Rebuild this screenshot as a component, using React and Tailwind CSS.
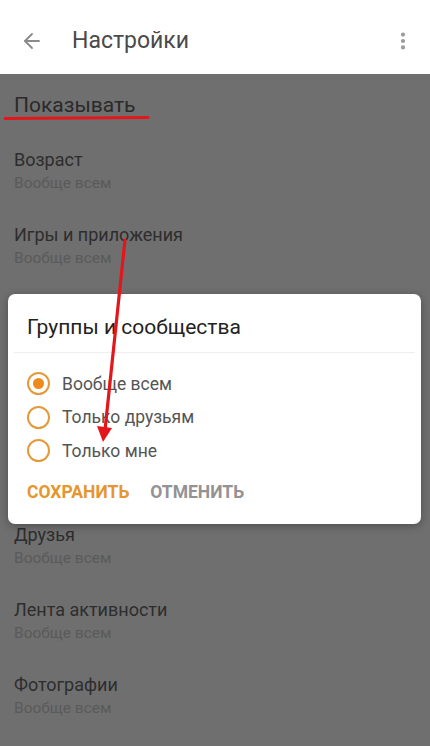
import { ArrowLeft, MoreVertical } from "lucide-react";

const font = { fontFamily: "Roboto, 'Noto Sans', sans-serif" };

// null = row hidden behind the dialog
const items = [
  "Возраст",
  "Игры и приложения",
  null,
  null,
  null,
  "Друзья",
  "Лента активности",
  "Фотографии",
];

function Row({ title }) {
  return (
    <div className="h-[75px] px-[14px] pt-[27px]">
      {title && (
        <>
          <div className="text-[18px] leading-[24px] text-[#2d2d2d]">{title}</div>
          <div className="text-[15.5px] leading-[22px] text-[#5a5a5a]">Вообще всем</div>
        </>
      )}
    </div>
  );
}

function Radio({ checked, label }) {
  return (
    <div className="flex items-center h-[33.5px] gap-[12px]">
      <span className="w-[23px] h-[23px] rounded-full border-[2.5px] border-[#e39a3a] flex items-center justify-center">
        {checked && <span className="w-[11px] h-[11px] rounded-full bg-[#ee8a1c]" />}
      </span>
      <span className="text-[17.5px] text-[#555]">{label}</span>
    </div>
  );
}

export default function App() {
  return (
    <div className="relative w-[430px] h-[746px] overflow-hidden bg-[#6f6f6f]" style={font}>
      {/* header */}
      <div className="h-[74px] bg-white flex items-center pl-[20px] pr-[16px] pt-[8px]">
        <ArrowLeft size={24} strokeWidth={1.8} className="text-[#8a8a8a]" />
        <span className="ml-[28px] text-[23px] text-[#4a4a4a]">Настройки</span>
        <MoreVertical size={22} strokeWidth={2.6} className="ml-auto text-[#9a9a9a]" />
      </div>

      {/* list (dimmed) */}
      <div className="px-[14px] pt-[19px] h-[47px]">
        <span className="text-[21px] leading-[24px] text-[#2a2a2a]">Показывать</span>
      </div>
      <div>
        {items.map((t, i) => (
          <Row key={i} title={t} />
        ))}
      </div>

      {/* dialog */}
      <div className="absolute left-[8px] top-[294px] w-[413px] h-[230px] bg-white rounded-[7px] shadow-[0_2px_8px_rgba(0,0,0,0.3)]">
        <div className="px-[19px] pt-[20px] pb-[12px] text-[21px] leading-[26px] text-[#222]">Группы и сообщества</div>
        <div className="mx-[6px] h-px bg-[#eeeeee]" />
        <div className="px-[19px] pt-[14px]">
          <Radio checked label="Вообще всем" />
          <Radio label="Только друзьям" />
          <Radio label="Только мне" />
        </div>
        <div className="flex gap-[21px] px-[19px] pt-[14px] text-[17.5px] leading-[20px] font-bold">
          <span className="text-[#e5962f]">СОХРАНИТЬ</span>
          <span className="text-[#939393]">ОТМЕНИТЬ</span>
        </div>
      </div>

      {/* red annotations */}
      <svg className="absolute left-0 top-0 pointer-events-none" width="430" height="746">
        <path d="M5 118.5 L148 117.5" stroke="#e3161b" strokeWidth="3" strokeLinecap="round" />
        <path d="M125 240 L105 430" stroke="#e3161b" strokeWidth="3.2" strokeLinecap="round" />
        <path d="M97 426 L103 442 L112 428 Z" fill="#e3161b" />
      </svg>
    </div>
  );
}
